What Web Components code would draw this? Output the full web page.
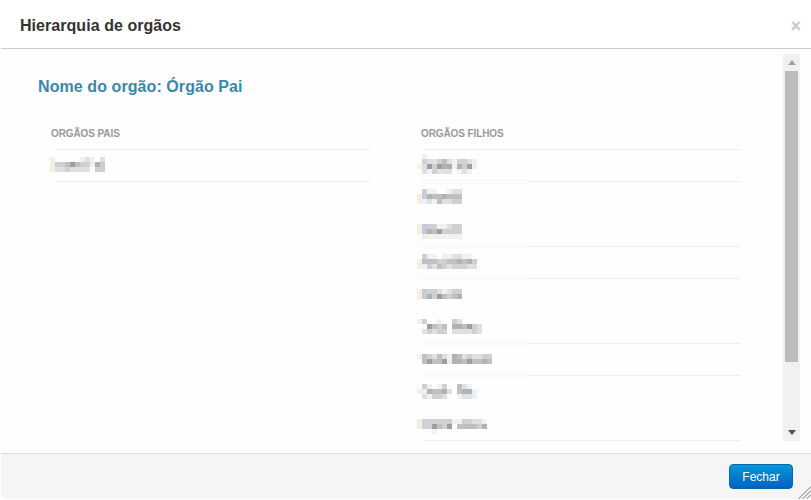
<!DOCTYPE html>
<html lang="pt">
<head>
<meta charset="utf-8">
<title>Hierarquia de orgãos</title>
<style>
  html, body { margin: 0; height: 100%; background: #fff; overflow: hidden; }
  body { font-family: "Liberation Sans", Arial, sans-serif; }
</style>
</head>
<body>
<org-modal heading="Hierarquia de orgãos">
  <h-name>Nome do orgão: Órgão Pai</h-name>
  <org-columns>
    <org-list slot="left" label="ORGÃOS PAIS" shift="-4">
      <org-row mx="-5" dy="7" h="32" cells="a.....121.2.|a334643 3a5c|a2232222.3 3."></org-row>
    </org-list>
    <org-list slot="right" label="ORGÃOS FILHOS" shift="-3">
      <org-row patch mx="-7" dy="4" h="32" cells=".1..........|.32234213 32b|a2636 5k1537b|.21322 2.121."></org-row>
      <org-row noline mx="-7" dy="7" h="33" cells=".311..122|ac5445444|ab2142233"></org-row>
      <org-row patch mx="-7" dy="9" h="32" cells="ac3311233|ac5463333|.a1111111"></org-row>
      <org-row patch mx="-7" dy="7" h="32" cells=".311.a12211.|a44433445453|ab3243233322"></org-row>
      <org-row noline mx="-7" dy="10" h="33" cells="ac3321233|ac5364345"></org-row>
      <org-row patch mx="-7" dy="7" h="32" cells="13..1..32....|..6434.55463 2|.23233.222232"></org-row>
      <org-row patch mx="-7" dy="10" h="32" cells="143242154232233|.46446b55464454"></org-row>
      <org-row noline mx="-7" dy="8" h="33" cells=".31.13..421.|ab54452.455b|.21332..122b"></org-row>
      <org-row mx="-7" dy="10" h="32" cells="a3333331a33221..|a336436.444435..|...1............"></org-row>
    </org-list>
  </org-columns>
  <org-button slot="footer">Fechar</org-button>
</org-modal>

<script>
class OrgModal extends HTMLElement {
    constructor() {
        super();
        this.attachShadow({ mode: 'open' });
    }

    connectedCallback() {
        this.shadowRoot.innerHTML = `
            <style>
                :host {
                    display: flex;
                    flex-direction: column;
                    position: relative;
                    height: 499px;
                    padding-left: 1px;
                    box-sizing: border-box;
                    overflow: hidden;
                }
                header {
                    height: 48px;
                    flex: none;
                    display: flex;
                    align-items: center;
                    justify-content: space-between;
                    box-sizing: content-box;
                    padding: 0 10px 0 19px;
                    border-bottom: 1px solid #ccc;
                    font-size: 16px;
                    font-weight: 700;
                    color: #333;
                }
                .title {
                    margin-top: 4px;
                    letter-spacing: 0.05px;
                }
                .close {
                    font-size: 18px;
                    line-height: 18px;
                    font-weight: 700;
                    color: #c8c8c8;
                    margin-top: 3px;
                }
                .body {
                    height: 404px;
                    flex: none;
                    display: flex;
                    background: #fefefe;
                }
                .main {
                    flex: 1;
                    min-width: 0;
                    overflow: hidden;
                    padding: 28px 0 0 37px;
                }
                footer {
                    flex: 1;
                    display: flex;
                    align-items: flex-start;
                    justify-content: flex-end;
                    padding: 10px 18px 0 0;
                    background: #f5f5f5;
                    border-top: 1px solid #ddd;
                    border-bottom-left-radius: 6px;
                }
                .grip {
                    position: absolute;
                    right: 0;
                    bottom: 0;
                }
            </style>
            <header>
                <span class="title">${this.getAttribute('heading')}</span>
                <span class="close">×</span>
            </header>
            <div class="body">
                <div class="main"><slot></slot></div>
                <org-scrollbar></org-scrollbar>
            </div>
            <footer><slot name="footer"></slot></footer>
            <svg class="grip" width="13" height="13" viewBox="0 0 13 13" stroke="#777" fill="none">
                <path d="M0.5 13 13 0.5M4.5 13 13 4.5M8.5 13 13 8.5"/>
            </svg>
        `;
    }
}

class HName extends HTMLElement {
    constructor() {
        super();
        this.attachShadow({ mode: 'open' });
        this.shadowRoot.innerHTML = `
            <style>
                :host {
                    display: block;
                    font-size: 16px;
                    line-height: 20px;
                    font-weight: 700;
                    letter-spacing: 0.08px;
                    color: #3a87ad;
                    margin-bottom: 30px;
                }
            </style>
            <slot></slot>
        `;
    }
}

class OrgColumns extends HTMLElement {
    constructor() {
        super();
        this.attachShadow({ mode: 'open' });
        this.shadowRoot.innerHTML = `
            <style>
                :host {
                    display: grid;
                    grid-template-columns: 316px 316px;
                    column-gap: 53px;
                    margin-left: 17px;
                }
            </style>
            <slot name="left"></slot>
            <slot name="right"></slot>
        `;
    }
}

class OrgList extends HTMLElement {
    constructor() {
        super();
        this.attachShadow({ mode: 'open' });
    }

    connectedCallback() {
        this.shadowRoot.innerHTML = `
            <style>
                :host { display: block; }
                .label {
                    height: 22px;
                    line-height: 13px;
                    font-size: 10px;
                    font-weight: 700;
                    letter-spacing: -0.1px;
                    color: #999;
                    border-bottom: 1px solid #eee;
                }
                .label span {
                    margin-left: ${this.getAttribute('shift')}px;
                }
            </style>
            <div class="label"><span>${this.getAttribute('label')}</span></div>
            <slot></slot>
        `;
    }
}

// blurred row: the text is unreadable in the reference, so cells are drawn as a 5px mosaic
const SHADES = {
    '1': '#f1f1f1', '2': '#e0e0e2', '3': '#d0d0d2', '4': '#c0c0be', '5': '#b2b2b4',
    '6': '#a09ca4', '7': '#a8a090', 'a': '#f6eee4', 'b': '#e8f2fa', 'c': '#c2ccd8', 'k': '#bcaca0'
};

class OrgRow extends HTMLElement {
    constructor() {
        super();
        this.attachShadow({ mode: 'open' });
    }

    connectedCallback() {
        const rows = this.getAttribute('cells').split('|').map(r => r.replace(/ /g, ''));
        const cols = Math.max(...rows.map(r => r.length));
        let rects = '';
        rows.forEach((row, y) => {
            [...row].forEach((ch, x) => {
                if (SHADES[ch]) {
                    rects += `<rect x="${x * 5}" y="${y * 5}" width="5" height="5" fill="${SHADES[ch]}"/>`;
                }
            });
        });
        const line = this.hasAttribute('noline') ? 'transparent' : '#eee';
        this.shadowRoot.innerHTML = `
            <style>
                :host {
                    display: flow-root;
                    position: relative;
                    box-sizing: border-box;
                    height: ${this.getAttribute('h')}px;
                    border-bottom: 1px solid ${line};
                }
                svg {
                    display: block;
                    position: relative;
                    z-index: 1;
                    margin: ${this.getAttribute('dy')}px 0 0 ${this.getAttribute('mx')}px;
                    shape-rendering: crispEdges;
                }
                .patch {
                    position: absolute;
                    left: -2px;
                    width: 106px;
                    bottom: -3px;
                    height: 5px;
                    background: #fafafa;
                }
            </style>
            ${this.hasAttribute('patch') ? '<div class="patch"></div>' : ''}
            <svg width="${cols * 5}" height="${rows.length * 5}">${rects}</svg>
        `;
    }
}

class OrgScrollbar extends HTMLElement {
    constructor() {
        super();
        this.attachShadow({ mode: 'open' });
        this.shadowRoot.innerHTML = `
            <style>
                :host {
                    display: flex;
                    flex-direction: column;
                    align-items: center;
                    flex: none;
                    box-sizing: border-box;
                    width: 17px;
                    height: 387px;
                    margin: 5px 11px 0 0;
                    background: #f1f1f1;
                }
                .btn {
                    flex: none;
                    height: 17px;
                    width: 100%;
                    display: flex;
                    align-items: center;
                    justify-content: center;
                }
                .thumb {
                    flex: none;
                    width: 13px;
                    height: 291px;
                    background: #bcbcbc;
                }
                .gap { flex: 1; }
            </style>
            <div class="btn"><svg width="8" height="5"><path d="M4 0 8 5H0z" fill="#a3a3a3"/></svg></div>
            <div class="thumb"></div>
            <div class="gap"></div>
            <div class="btn"><svg width="8" height="5"><path d="M0 0H8L4 5z" fill="#505050"/></svg></div>
        `;
    }
}

class OrgButton extends HTMLElement {
    constructor() {
        super();
        this.attachShadow({ mode: 'open' });
        this.shadowRoot.innerHTML = `
            <style>
                :host { display: block; }
                button {
                    display: block;
                    box-sizing: border-box;
                    width: 64px;
                    height: 25px;
                    padding: 0;
                    font: 12px "Liberation Sans", Arial, sans-serif;
                    color: #fff;
                    background: linear-gradient(#0099d8, #0062c4);
                    border: 1px solid #0a68ac;
                    border-radius: 4px;
                }
            </style>
            <button><slot></slot></button>
        `;
    }
}

customElements.define('org-modal', OrgModal);
customElements.define('h-name', HName);
customElements.define('org-columns', OrgColumns);
customElements.define('org-list', OrgList);
customElements.define('org-row', OrgRow);
customElements.define('org-scrollbar', OrgScrollbar);
customElements.define('org-button', OrgButton);
</script>
</body>
</html>
